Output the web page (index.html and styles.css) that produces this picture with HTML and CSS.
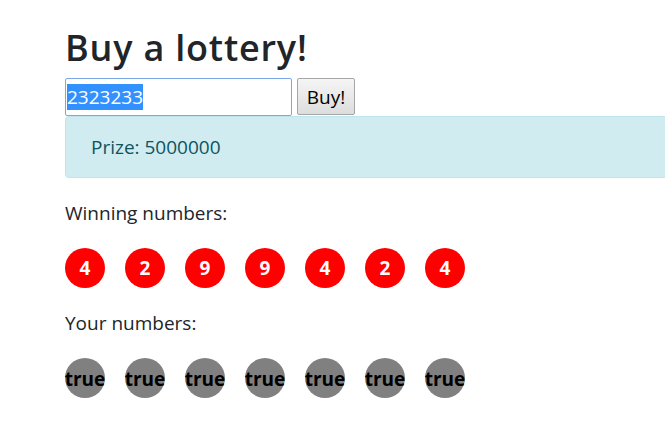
FILE: index.html
```html
<!DOCTYPE html>
<html lang="en">
<head>
<meta charset="utf-8">
<title>Buy a lottery!</title>
<link rel="stylesheet" href="styles.css">
</head>
<body>
<main class="page">
  <h1 class="title">Buy a lottery!</h1>
  <form class="buy-form">
    <input class="ticket-input" type="text" value="2323233" autofocus>
    <button class="buy-btn" type="button">Buy!</button>
  </form>
  <div class="alert">Prize: 5000000</div>
  <p class="label">Winning numbers:</p>
  <div class="balls">
    <span class="ball ball-win">4</span>
    <span class="ball ball-win">2</span>
    <span class="ball ball-win">9</span>
    <span class="ball ball-win">9</span>
    <span class="ball ball-win">4</span>
    <span class="ball ball-win">2</span>
    <span class="ball ball-win">4</span>
  </div>
  <p class="label">Your numbers:</p>
  <div class="balls">
    <span class="ball ball-mine">true</span>
    <span class="ball ball-mine">true</span>
    <span class="ball ball-mine">true</span>
    <span class="ball ball-mine">true</span>
    <span class="ball ball-mine">true</span>
    <span class="ball ball-mine">true</span>
    <span class="ball ball-mine">true</span>
  </div>
</main>
<script src="script.js"></script>
</body>
</html>
```
FILE: styles.css
```css
html {
  font-size: 20px;
}
body {
  margin: 0;
  font-family: "Open Sans", "Noto Sans", sans-serif;
  font-size: 19px;
  line-height: 30px;
  color: #212529;
  background: #fff;
  overflow: hidden;
}
.page {
  padding: 24px 0 0 65px;
}
.title {
  margin: 0 0 6px;
  font-size: 36px;
  line-height: 48px;
  font-weight: 600;
  letter-spacing: 0.8px;
  color: #212529;
}
.buy-form {
  display: flex;
  align-items: flex-start;
  gap: 5px;
  margin: 0;
}
.ticket-input {
  box-sizing: border-box;
  width: 227px;
  height: 38px;
  margin: 0;
  padding: 0 1px;
  border: 1px solid #7ba7e6;
  border-radius: 2px;
  font-family: "Open Sans", "Noto Sans", sans-serif;
  font-size: 19px;
  color: #212529;
  outline: none;
}
.ticket-input::selection {
  background: #3390ff;
  color: #fff;
}
.buy-btn {
  box-sizing: border-box;
  width: 58px;
  height: 37px;
  margin: 0;
  padding: 0;
  border: 1px solid #a6a6a6;
  border-radius: 2px;
  background: linear-gradient(#f5f5f5, #dddddd);
  font-family: "Open Sans", "Noto Sans", sans-serif;
  font-size: 19px;
  color: #000;
}
.alert {
  margin: 0 -10px 20px 0;
  padding: 15px 25px;
  border: 1px solid #bee5eb;
  border-radius: 4px;
  background: #d1ecf1;
  color: #0c5460;
}
.label {
  margin: 0 0 20px;
}
.balls {
  display: flex;
  gap: 20px;
  margin-bottom: 20px;
}
.ball {
  display: flex;
  align-items: center;
  justify-content: center;
  width: 40px;
  height: 40px;
  border-radius: 50%;
  font-weight: 700;
  font-size: 19px;
  line-height: 40px;
  white-space: nowrap;
}
.ball-win {
  background: #ff0000;
  color: #fff;
}
.ball-mine {
  background: #808080;
  color: #000;
  padding-top: 2px;
  box-sizing: border-box;
}
```
FILE: script.js
```js
var field = document.querySelector('.ticket-input');
field.focus();
field.select();
```
